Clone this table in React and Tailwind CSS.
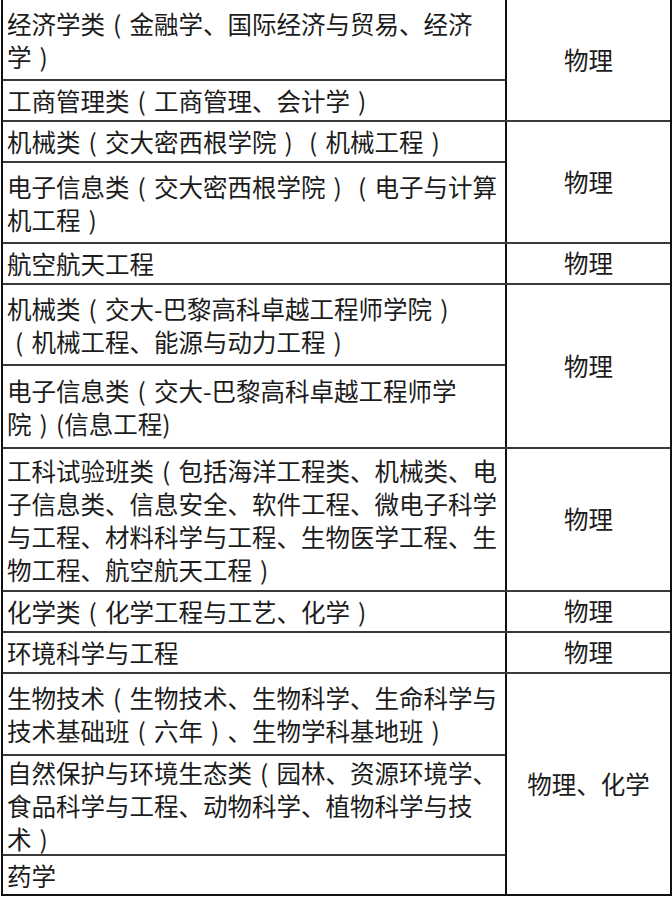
const groups = [
  {
    h: 'h-[122px]',
    subject: '物理',
    rows: [
      { h: 'h-[81px]', lines: ['经济学类（金融学、国际经济与贸易、经济', '学）'] },
      { h: 'flex-1', lines: ['工商管理类（工商管理、会计学）'] },
    ],
  },
  {
    h: 'h-[122px]',
    subject: '物理',
    rows: [
      { h: 'h-[41px]', lines: ['机械类（交大密西根学院）（机械工程）'] },
      { h: 'flex-1', lines: ['电子信息类（交大密西根学院）（电子与计算', '机工程）'] },
    ],
  },
  {
    h: 'h-[41px]',
    subject: '物理',
    rows: [{ h: 'flex-1', lines: ['航空航天工程'] }],
  },
  {
    h: 'h-[164px]',
    subject: '物理',
    rows: [
      { h: 'h-[81px]', lines: ['机械类（交大-巴黎高科卓越工程师学院）', '（机械工程、能源与动力工程）'] },
      { h: 'flex-1', lines: ['电子信息类（交大-巴黎高科卓越工程师学', '院）(信息工程)'] },
    ],
  },
  {
    h: 'h-[143px]',
    subject: '物理',
    rows: [
      {
        h: 'flex-1',
        lines: [
          '工科试验班类（包括海洋工程类、机械类、电',
          '子信息类、信息安全、软件工程、微电子科学',
          '与工程、材料科学与工程、生物医学工程、生',
          '物工程、航空航天工程）',
        ],
      },
    ],
  },
  {
    h: 'h-[41px]',
    subject: '物理',
    rows: [{ h: 'flex-1', lines: ['化学类（化学工程与工艺、化学）'] }],
  },
  {
    h: 'h-[41px]',
    subject: '物理',
    rows: [{ h: 'flex-1', lines: ['环境科学与工程'] }],
  },
  {
    h: 'h-[220px]',
    subject: '物理、化学',
    last: true,
    rows: [
      { h: 'h-[82px]', lines: ['生物技术（生物技术、生物科学、生命科学与', '技术基础班（六年）、生物学科基地班）'] },
      {
        h: 'h-[100px]',
        lines: ['自然保护与环境生态类（园林、资源环境学、', '食品科学与工程、动物科学、植物科学与技', '术）'],
      },
      { h: 'flex-1', lines: ['药学'] },
    ],
  },
]

// 全角括号在参考图里是居中的半角括号，占一个字宽
function Line({ text }) {
  const parts = text.split(/([（）])/)
  return (
    <div className="whitespace-nowrap leading-[33px]">
      {parts.map((p, i) =>
        p === '（' || p === '）' ? (
          <span key={i} className="inline-block w-[1em] text-center">{p === '（' ? '(' : ')'}</span>
        ) : (
          <span key={i}>{p}</span>
        )
      )}
    </div>
  )
}

function Cell({ h, lines, last }) {
  return (
    <div className={`${h} flex flex-col justify-center pl-[4px] ${last ? '' : 'border-b-2 border-[#3a3a3a]'}`}>
      {lines.map((l, i) => (
        <Line key={i} text={l} />
      ))}
    </div>
  )
}

export default function App() {
  return (
    <div
      className="bg-white w-[672px] h-[901px] text-[#1c1c1c] text-[24.5px]"
      style={{ fontFamily: '"Noto Sans CJK SC", "Noto Sans", sans-serif' }}
    >
      <div className="ml-px w-[671px] border-l-2 border-r-2 border-b-2 border-[#111]">
        {groups.map((g, gi) => (
          <div key={gi} className={`${g.h} flex ${g.last ? '' : 'border-b-2 border-[#3a3a3a]'}`}>
            <div className="w-[502px] flex flex-col">
              {g.rows.map((r, ri) => (
                <Cell key={ri} h={r.h} lines={r.lines} last={ri === g.rows.length - 1} />
              ))}
            </div>
            <div className="flex-1 border-l-2 border-[#111] flex items-center justify-center">
              {g.subject}
            </div>
          </div>
        ))}
      </div>
    </div>
  )
}
